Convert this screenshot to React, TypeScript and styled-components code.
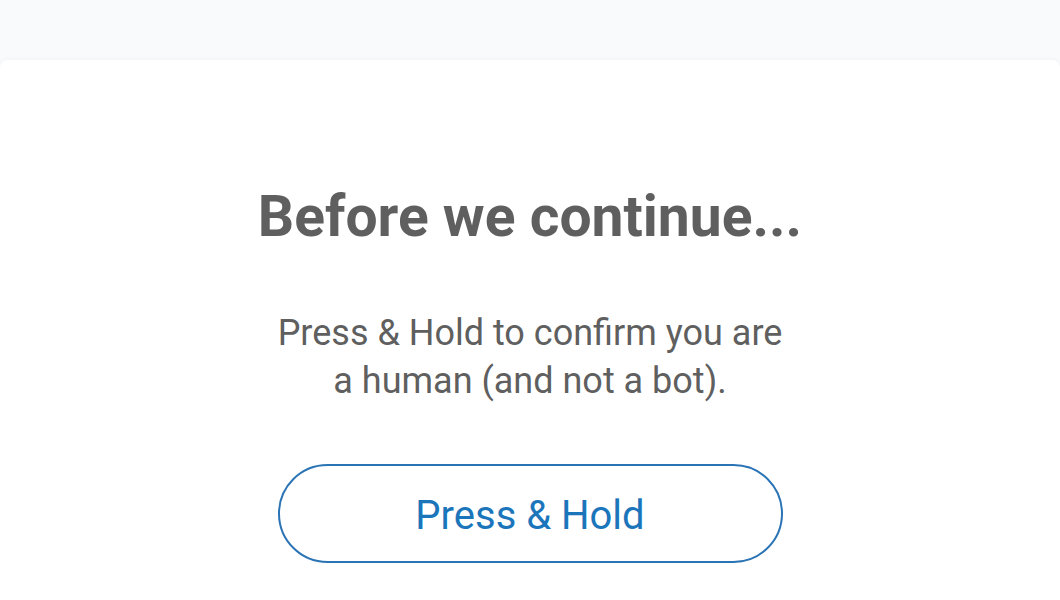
import React from "react";
import styled, { createGlobalStyle } from "styled-components";

const GlobalStyle = createGlobalStyle`
  html, body {
    margin: 0;
    padding: 0;
    background: #f9fafc;
    font-family: Roboto, "Noto Sans", Arial, sans-serif;
  }
`;

export default function App() {
  return (
    <>
      <GlobalStyle />
      <Page>
        <TopBar />
        <Card>
          <Title>Before we continue...</Title>
          <Message>
            Press &amp; Hold to confirm you are
            <br />
            a human (and not a bot).
          </Message>
          <HoldButton type="button">Press &amp; Hold</HoldButton>
        </Card>
      </Page>
    </>
  );
}

const Page = styled.div`
  display: flex;
  flex-direction: column;
  width: 100vw;
  height: 100vh;
  overflow: hidden;
  background: #f9fafc;
`;

const TopBar = styled.div`
  height: 60px;
  flex-shrink: 0;
  background: #f9fafc;
`;

const Card = styled.div`
  flex: 1 0 0;
  display: flex;
  flex-direction: column;
  align-items: center;
  padding-top: 123px;
  background: #fff;
  border-radius: 8px 8px 0 0;
  box-shadow: 0 -1px 4px rgba(0, 0, 0, 0.03);
`;

const Title = styled.h1`
  margin: 0;
  color: #5f5f5f;
  font-family: Roboto, "Noto Sans", Arial, sans-serif;
  font-size: 57px;
  font-weight: 700;
  line-height: 1.2;
  text-align: center;
`;

const Message = styled.p`
  margin: 58px 0 0;
  color: #5f5f5f;
  font-family: Roboto, "Noto Sans", Arial, sans-serif;
  font-size: 36px;
  font-weight: 400;
  line-height: 48px;
  text-align: center;
`;

const HoldButton = styled.button`
  box-sizing: border-box;
  margin-top: 59px;
  width: 505px;
  height: 99px;
  padding: 3px 0 0;
  display: flex;
  align-items: center;
  justify-content: center;
  border: 2px solid #2a74b5;
  border-radius: 50px;
  background: #fff;
  color: #1b75bb;
  font-family: Roboto, "Noto Sans", Arial, sans-serif;
  font-size: 40px;
  font-weight: 400;
  cursor: pointer;
`;
